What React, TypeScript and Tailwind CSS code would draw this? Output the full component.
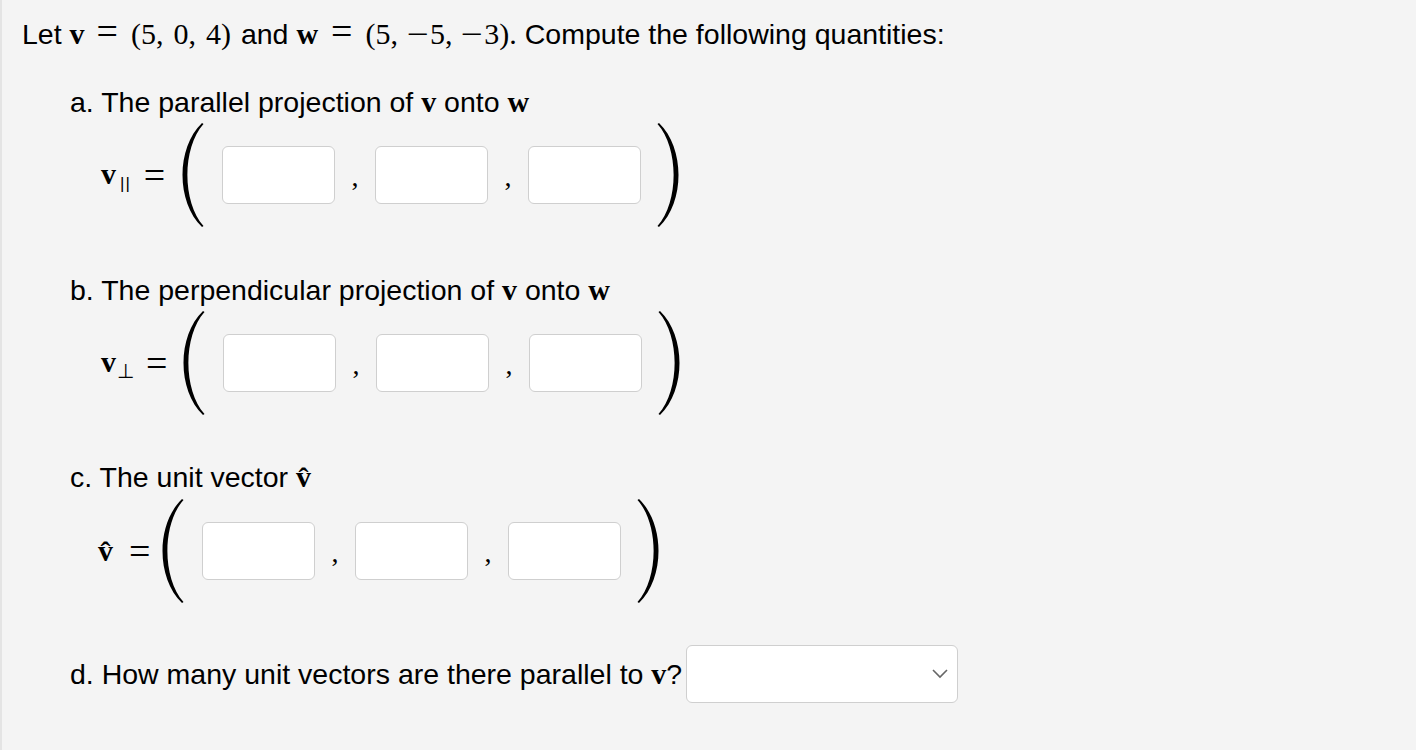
import React from "react";

const SERIF = "font-['Liberation_Serif','Times_New_Roman',serif]";

function LParen() {
  return (
    <svg width="24" height="106" viewBox="0 0 24 106" className="shrink-0 block">
      <path d="M22 1 C-4 26, -4 80, 22 105 L23.5 104 C2 80, 2 26, 23.5 2 Z" fill="#000" />
    </svg>
  );
}

function RParen() {
  return (
    <svg width="24" height="106" viewBox="0 0 24 106" className="shrink-0 block">
      <path d="M2 1 C28 26, 28 80, 2 105 L0.5 104 C22 80, 22 26, 0.5 2 Z" fill="#000" />
    </svg>
  );
}

function Box() {
  return (
    <input
      type="text"
      className="w-[113px] h-[58px] rounded-[6px] border-[1.5px] border-[#cfcfcf] bg-white outline-none shrink-0"
    />
  );
}

function Comma() {
  return (
    <span className={`${SERIF} w-[40px] text-center text-[28px] leading-none pt-[4px] shrink-0`}>,</span>
  );
}

function V() {
  return <span className={`${SERIF} font-bold text-[30px] leading-none`}>v</span>;
}
function W() {
  return <span className={`${SERIF} font-bold text-[30px] leading-none`}>w</span>;
}

function VectorRow({ label, labelWidth }: { label: React.ReactNode; labelWidth: string }) {
  return (
    <div className="flex items-center h-[106px] ml-[75px]">
      <div className={`flex items-center ${labelWidth} shrink-0`}>{label}</div>
      <div>
        <LParen />
      </div>
      <div className="ml-[18px] flex items-center">
        <Box />
        <Comma />
        <Box />
        <Comma />
        <Box />
      </div>
      <div className="ml-[16px]">
        <RParen />
      </div>
    </div>
  );
}

function Eq() {
  return <span className={`${SERIF} text-[38px] leading-none`}>=</span>;
}

function Minus() {
  return <span className="inline-block scale-x-[1.3] origin-right mr-[1px]">−</span>;
}

export default function App() {
  return (
    <div className="min-h-[750px] bg-[#f4f4f4] border-l-2 border-[#e4e4e4] pl-[20px] pt-[12px] text-black font-['Liberation_Sans',Arial,sans-serif]">
      <p className="text-[28.5px] h-[34px] leading-[34px] whitespace-nowrap">
        Let <V />
        <span className={`${SERIF} text-[30px] leading-none`}>
          <span className="ml-[12px] mr-[13px] text-[38px] leading-none">=</span>(5,<span className="ml-[10px]">0,</span><span className="ml-[10px]">4)</span>
        </span>{" "}
        <span className="ml-[2px]">and</span> <W />
        <span className={`${SERIF} text-[30px] leading-none`}>
          <span className="ml-[13px] mr-[13px] text-[38px] leading-none">=</span>(5,<span className="ml-[14px]"><Minus />5,</span><span className="ml-[14px]"><Minus />3)</span>.
        </span>{" "}
        Compute the following quantities:
      </p>

      <div className="ml-[48px]">
        <p className="mt-[39px] text-[28.5px] h-[34px] leading-[34px] whitespace-nowrap">
          a. The parallel projection of <V /> onto <W />
        </p>
        <div className="-ml-[48px] mt-[3px]">
          <VectorRow
            labelWidth="w-[83px]"
            label={
              <>
                <span className="ml-[4px]">
                  <V />
                </span>
                <span className="text-[17px] font-['Liberation_Sans',sans-serif] relative top-[8px] ml-[4px] tracking-[1px] leading-none">||</span>
                <span className="ml-[13px]">
                  <Eq />
                </span>
              </>
            }
          />
        </div>

        <p className="mt-[45px] text-[28.5px] h-[34px] leading-[34px] whitespace-nowrap">
          b. The perpendicular projection of <V /> onto <W />
        </p>
        <div className="-ml-[48px] mt-[3px]">
          <VectorRow
            labelWidth="w-[84px]"
            label={
              <>
                <span className="ml-[4px]">
                  <V />
                </span>
                <span className={`${SERIF} text-[20px] relative top-[8px] ml-[1px] leading-none`}>⊥</span>
                <span className="ml-[12px]">
                  <Eq />
                </span>
              </>
            }
          />
        </div>

        <p className="mt-[44px] text-[28.5px] h-[34px] leading-[34px] whitespace-nowrap">
          c. The unit vector <span className={`${SERIF} font-bold text-[30px] leading-none`}>v̂</span>
        </p>
        <div className="-ml-[48px] mt-[4px]">
          <VectorRow
            labelWidth="w-[63px]"
            label={
              <>
                <span className={`${SERIF} font-bold text-[30px] leading-none ml-[1px]`}>v̂</span>
                <span className="ml-[16px]">
                  <Eq />
                </span>
              </>
            }
          />
        </div>

        <div className="mt-[41px] flex items-center h-[58px]">
          <span className="text-[28.5px] leading-[34px] whitespace-nowrap">
            d. How many unit vectors are there parallel to <V />?
          </span>
          <div className="ml-[4px] w-[272px] h-[58px] rounded-[6px] border-[1.5px] border-[#cfcfcf] bg-white flex items-center justify-end pr-[9px]">
            <svg width="16" height="10" viewBox="0 0 16 10">
              <path d="M1 1 L8 8 L15 1" fill="none" stroke="#666" strokeWidth="1.6" />
            </svg>
          </div>
        </div>
      </div>
    </div>
  );
}
